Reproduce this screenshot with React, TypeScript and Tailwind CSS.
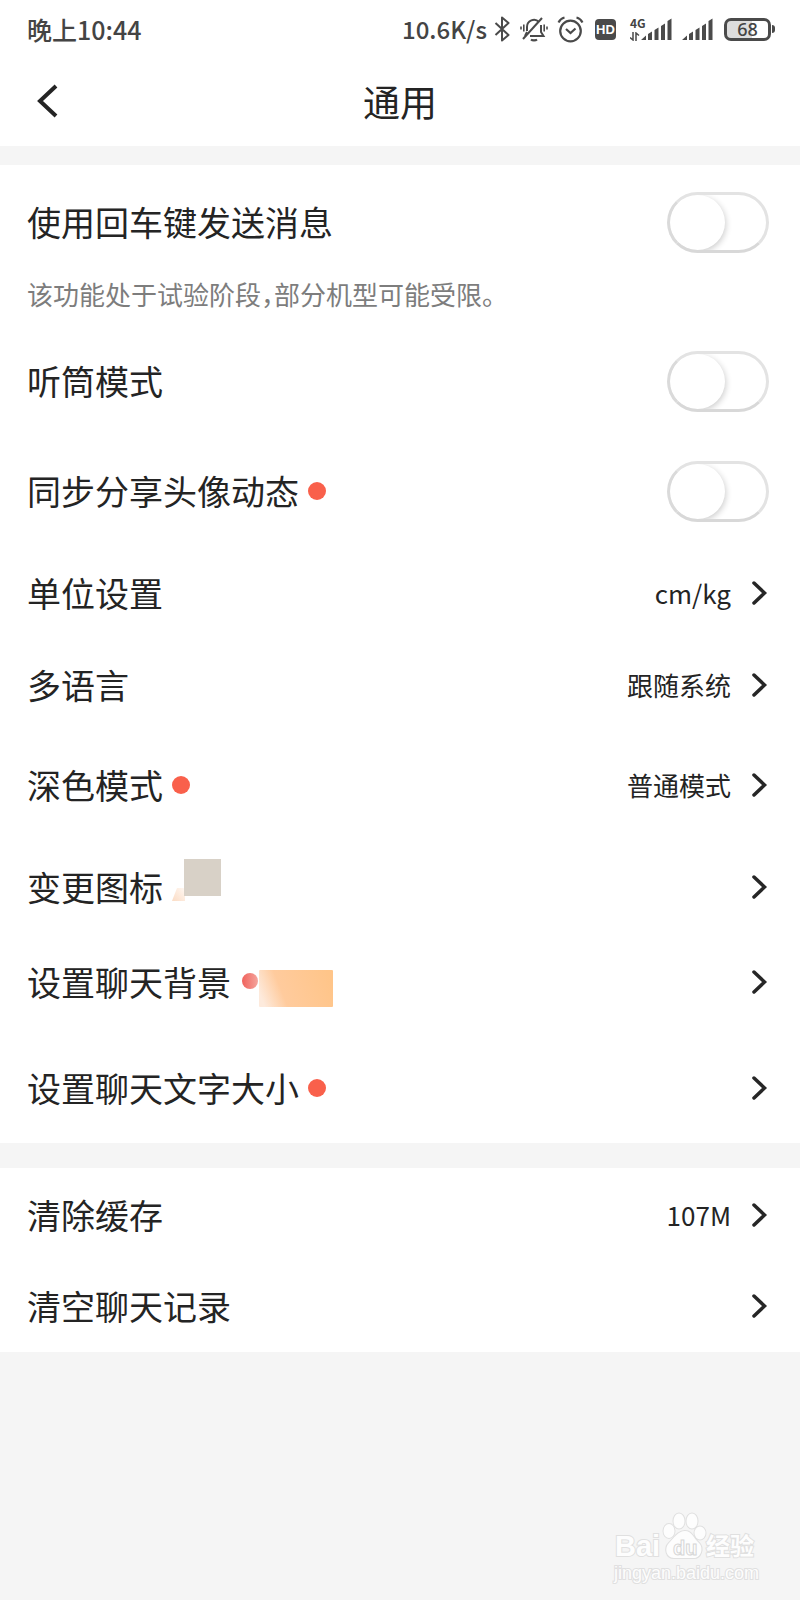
import { useState } from 'react';
import type { ReactNode } from 'react';
import clsx from 'clsx';

function Dot() {
  return <span className="w-[18px] h-[18px] rounded-full bg-[#f9604b]" />;
}

function Chevron() {
  return (
    <svg width="20" height="30" viewBox="0 0 20 30" fill="none" aria-hidden="true">
      <path d="M5 5l10.500 10L5 25" stroke="#262626" strokeWidth="3.500" strokeLinecap="round" />
    </svg>
  );
}

// Blurred preview next to the app icon entry
function IconPreview() {
  return (
    <svg width="52" height="60" viewBox="0 0 52 60" aria-hidden="true">
      <defs>
        <linearGradient id="smear" x1="0" y1="1" x2="1" y2="0">
          <stop offset="0" stopColor="#fbdcc5" />
          <stop offset="1" stopColor="#fff8f2" />
        </linearGradient>
      </defs>
      <path d="M0 44L5 31h8v13z" fill="url(#smear)" />
      <rect x="12" y="2" width="37" height="37" fill="#d8d1c7" />
    </svg>
  );
}

function BackgroundPreview() {
  return (
    <svg width="96" height="60" viewBox="0 0 96 60" aria-hidden="true">
      <defs>
        <linearGradient id="dotFade" x1="0" y1="0" x2="1" y2="0">
          <stop offset="0" stopColor="#f0625c" />
          <stop offset="1" stopColor="#f4a59d" />
        </linearGradient>
        <linearGradient id="peach" x1="0" y1="0.600" x2="1" y2="0.400">
          <stop offset="0" stopColor="#fdeadc" />
          <stop offset="0.300" stopColor="#ffcb9d" />
          <stop offset="1" stopColor="#ffc589" />
        </linearGradient>
      </defs>
      <circle cx="10" cy="29" r="8" fill="url(#dotFade)" />
      <rect x="19" y="18" width="74" height="37" rx="1" fill="url(#peach)" />
    </svg>
  );
}

type ToggleRowProps = {
  id: string;
  label: string;
  dot?: boolean;
  className?: string;
};

function ToggleRow({ id, label, dot, className }: ToggleRowProps) {
  const [on, setOn] = useState(false);

  return (
    <div className={clsx('h-[60px] flex items-center justify-between', className)}>
      <div className="flex items-center gap-[9px]">
        <label htmlFor={id}>{label}</label>
        {dot && <Dot />}
      </div>
      <input
        id={id}
        type="checkbox"
        role="switch"
        checked={on}
        onChange={(e) => setOn(e.target.checked)}
        className="appearance-none shrink-0 overflow-hidden w-[102px] h-[61px] rounded-full border-3 border-[#e3e3e3] border-l-[#dadada] border-b-[#d8d8d8] bg-white checked:bg-[#f9604b] before:content-[''] before:block before:w-[55px] before:h-[55px] before:rounded-full before:bg-white before:shadow-[1px_2px_6px_rgba(0,0,0,0.2)] checked:before:translate-x-[41px]"
      />
    </div>
  );
}

type LinkRowProps = {
  label: string;
  value?: string;
  extra?: ReactNode;
  className?: string;
};

function LinkRow({ label, value, extra, className }: LinkRowProps) {
  return (
    <button
      type="button"
      className={clsx('w-full h-[60px] flex items-center justify-between text-left', className)}
    >
      <span className="flex items-center gap-[9px]">
        {label}
        {extra}
      </span>
      <span className="flex items-center gap-[18px] text-[26px]">
        {value}
        <Chevron />
      </span>
    </button>
  );
}

function SignalBars() {
  return (
    <svg width="31" height="24" viewBox="0 0 31 24" fill="#4a4a4a" aria-hidden="true">
      <path d="M0 23L5 18.500V23zM7 17l4-2.500V23H7zM13.500 13l4-2.500V23h-4zM20 9l4-2.500V23h-4zM26.500 4l4-2.500V23h-4z" />
    </svg>
  );
}

function StatusBar() {
  return (
    <div className="h-[58px] pl-[27px] pr-[25px] flex items-center justify-between text-[25px] leading-[30px] font-medium text-[#444444]">
      <span className="pb-px">晚上10:44</span>
      <div className="flex items-center">
        <span className="mr-[7px] pb-px text-[24px]">10.6K/s</span>
        {/* Bluetooth */}
        <svg width="17" height="26" viewBox="0 0 17 26" fill="none" stroke="#4a4a4a" strokeWidth="2" strokeLinejoin="round" className="mr-[9px]" aria-hidden="true">
          <path d="M1.500 7l13 12-6.500 5.500v-23L14.500 7l-13 12" />
        </svg>
        {/* Muted bell */}
        <svg width="28" height="28" viewBox="0 0 28 28" fill="none" stroke="#4a4a4a" strokeWidth="2" className="mr-[9px]" aria-hidden="true">
          <path d="M7 16v-4a7 7 0 0 1 12-5M21 10v7l2.500 4H10M5 21l2-4" />
          <path d="M3 24L22 3" />
          <path d="M11 24.500a3.500 2 0 0 0 6 0" fill="#4a4a4a" />
          <path d="M3.800 9.500v7M1 11.500v3M24.200 9.500v7M27 11.500v3" strokeWidth="1.600" />
        </svg>
        {/* Alarm */}
        <svg width="27" height="28" viewBox="0 0 27 28" fill="none" stroke="#4a4a4a" strokeWidth="2.200" className="mr-[11px]" aria-hidden="true">
          <circle cx="13.500" cy="16" r="10.300" />
          <path d="M1.500 7.500Q3.500 3.500 7.500 2.500M25.500 7.500q-2-4-6-5M9 14l4.500 4 5-4.500" />
        </svg>
        <span className="w-[21px] h-[21px] mr-[14px] rounded bg-[#4a4a4a] text-white flex items-center justify-center text-[13px] leading-none font-bold font-['Liberation_Sans',sans-serif]">
          HD
        </span>
        <div className="flex items-end mr-[10px]">
          <div className="w-[19px] -mr-2 flex flex-col items-start gap-[3px]">
            <span className="text-[12px] leading-[12px] font-bold">4G</span>
            <svg width="10" height="9" viewBox="0 0 10 9" fill="none" stroke="#4a4a4a" strokeWidth="1.500" aria-hidden="true">
              <path d="M3 0v8L0 5.500M6 9V1l3 2.500" />
            </svg>
          </div>
          <SignalBars />
        </div>
        <SignalBars />
        <div className="ml-[11px] flex items-center gap-px">
          <span className="w-[47px] h-[23px] rounded-[7px] border-3 border-[#4a4a4a] bg-linear-to-r from-[#dddddd] from-60% to-white to-60% flex items-center justify-center text-[18px] leading-none font-['Noto_Sans',sans-serif]">
            68
          </span>
          <span className="w-[3px] h-[8px] rounded-r bg-[#4a4a4a]" />
        </div>
      </div>
    </div>
  );
}

function Watermark() {
  return (
    <svg width="150" height="76" viewBox="0 0 150 76" aria-label="Baidu 经验">
      <g fill="#fdfdfd" stroke="#e0e0e0" strokeWidth="2" paintOrder="stroke">
        <text x="3" y="47" fontSize="29" fontWeight="700" fontFamily="Liberation Sans">Bai</text>
        <ellipse cx="57" cy="22" rx="5.500" ry="7" />
        <ellipse cx="67" cy="12" rx="5.500" ry="7.500" />
        <ellipse cx="80" cy="12" rx="5.500" ry="7.500" />
        <ellipse cx="88" cy="24" rx="5.500" ry="6.500" />
        <path d="M73 22c7 0 9 8 14 12 5 5 2 15-5 15H62c-8 0-10-10-5-15s9-12 16-12z" />
        <text x="94" y="46" fontSize="24" fontWeight="700" fontFamily="Noto Sans CJK SC">经验</text>
        <text x="2" y="70" fontSize="18" fontFamily="Liberation Sans">jingyan.baidu.com</text>
      </g>
      <text x="61" y="46" fontSize="20" fontWeight="700" fill="#fdfdfd" stroke="#d6d6d6" strokeWidth="1" fontFamily="Liberation Sans">
        du
      </text>
    </svg>
  );
}

export default function App() {
  return (
    <div className="min-h-screen flex flex-col bg-[#f5f5f5] text-[#242424] font-['Noto_Sans_CJK_SC',sans-serif]">
      <header className="bg-white">
        <StatusBar />
        <div className="h-[88px] px-7 pb-[2px] grid grid-cols-3 items-center">
          <button type="button" aria-label="返回" className="w-10 h-12 flex items-center justify-center">
            <svg width="24" height="38" viewBox="0 0 24 38" fill="none">
              <path d="M20 4L4 19l16 15" stroke="#242424" strokeWidth="4" />
            </svg>
          </button>
          <h1 className="text-[37px] leading-none text-center">通用</h1>
        </div>
      </header>

      <main className="text-[34px] leading-none">
        <section className="mt-[19px] pl-[27px] pr-[31px] pt-[27px] pb-[25px] bg-white">
          <ToggleRow id="enter-send" label="使用回车键发送消息" />
          <p className="mt-[22px] h-[42px] leading-10 text-[26px] text-[#7d7d7d]">
            该功能处于试验阶段<span className="[font-feature-settings:'halt']">，</span>部分机型可能受限。
          </p>
          <ToggleRow id="earpiece" label="听筒模式" className="mt-[35px]" />
          <ToggleRow id="sync-avatar" label="同步分享头像动态" dot className="mt-[50px]" />
          <LinkRow label="单位设置" value="cm/kg" className="mt-[42px]" />
          <LinkRow label="多语言" value="跟随系统" className="mt-8" />
          <LinkRow label="深色模式" value="普通模式" extra={<Dot />} className="mt-10" />
          <LinkRow label="变更图标" extra={<IconPreview />} className="mt-[42px]" />
          <LinkRow label="设置聊天背景" extra={<BackgroundPreview />} className="mt-[35px]" />
          <LinkRow label="设置聊天文字大小" extra={<Dot />} className="mt-[46px]" />
        </section>

        <section className="mt-[25px] pl-[27px] pr-[31px] pt-[17px] pb-4 bg-white">
          <LinkRow label="清除缓存" value="107M" />
          <LinkRow label="清空聊天记录" className="mt-[31px]" />
        </section>
      </main>

      <footer className="mt-auto pr-[38px] pb-[15px] flex justify-end">
        <Watermark />
      </footer>
    </div>
  );
}
